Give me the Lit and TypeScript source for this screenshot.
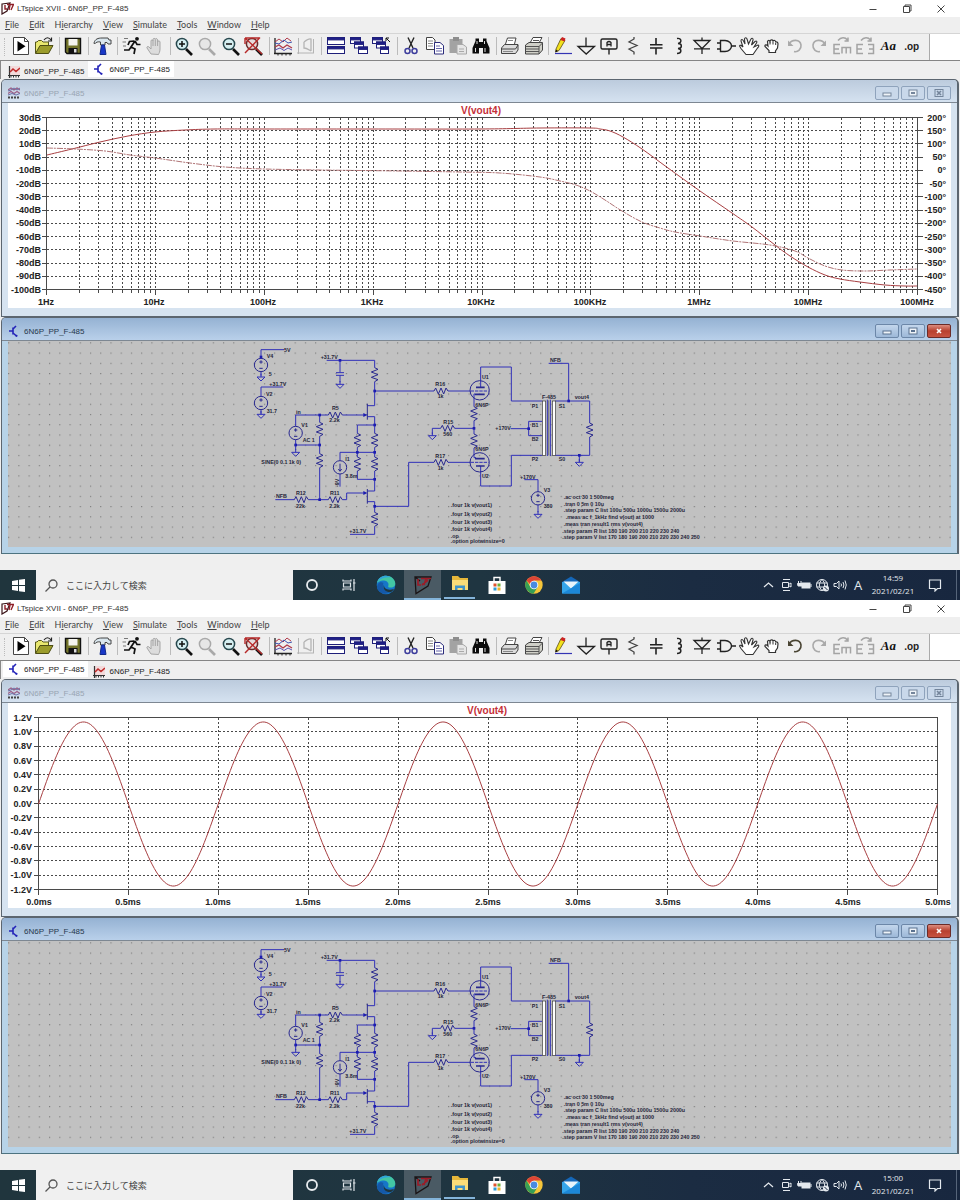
import { LitElement, html, svg, css, nothing } from "lit";
import { customElement, property } from "lit/decorators.js";
import { classMap } from "lit/directives/class-map.js";

type Pt = [number, number];

/* ---------- toolbar and window glyphs, each on a 24 x 20 canvas ---------- */

const lens = (stroke: string, handle: string, fill: string) => svg`
  <path d="M14 13 L20 19" stroke=${handle} stroke-width="2.6"/>
  <circle cx="10" cy="8" r="5.6" fill=${fill} stroke=${stroke} stroke-width="1.5"/>`;

const sheet = (x: number, y: number, w: number, h: number) => svg`
  <rect x=${x} y=${y} width=${w} height=${h} fill="#fff" stroke="#1f1f7a"/>
  <rect x=${x} y=${y} width=${w} height="2.4" fill="#1f1f8a" stroke="#1f1f7a"/>`;

const icons: Record<string, unknown> = {
  run: svg`<path d="M4.5 1.5 H15.5 L19.5 5.5 V18.5 H4.5 Z" fill="#fff" stroke="#444"/>
    <path d="M15.5 1.5 V5.5 H19.5" fill="none" stroke="#444"/><path d="M8.5 5 L16.5 10.2 L8.5 15.5 Z" fill="#000"/>`,
  open: svg`<path d="M3.5 17 V6 H5 L6.500 4.500 H9.500 L11 6 H16.500 V9" fill="#e9e870" stroke="#55561a"/>
    <path d="M3.500 17.500 L8 9.500 H21 L16.500 17.500 Z" fill="#9b9c2b" stroke="#4c4d14"/>
    <path d="M12 4 C14 1 17 1 19 4 M19.500 1.500 V5 H16" fill="none" stroke="#222" stroke-width="1.200"/>`,
  save: svg`<path d="M4.500 2.500 H19.500 V17.500 H6 L4.500 16 Z" fill="#73752a" stroke="#111" stroke-width="1.400"/>
    <rect x="7.500" y="3" width="9" height="6.500" fill="#f4f4ee"/><rect x="7.500" y="12" width="9" height="5.500" fill="#111"/>
    <rect x="13" y="13" width="2.500" height="3.500" fill="#ddd"/>`,
  hammer: svg`<path d="M4 7 C5 3 8 2 12 2 H18 L19 4 H21 V8 H18 L17 6.500 H15 V9 H10.500 V6 C8 5.500 6 6 4.500 8 Z" fill="#d9e6ee" stroke="#444"/>
    <path d="M11.500 9 H14.500 L16 18.500 H10 Z" fill="#1838c8" stroke="#122a8c"/>`,
  runner: svg`<circle cx="17" cy="2.800" r="1.900" fill="#111"/>
    <path d="M15 5 L11 11 L15 13 L14 18 M11 11 L9 14 H4 M15 5 L17 8.500 H20.500 M14.500 5 L9.500 5.500 L8 9" fill="none" stroke="#111" stroke-width="1.700"/>
    <path d="M4 2.500 H8 M2.500 6 H6 M3 10 H6" stroke="#777"/>`,
  hand: svg`<path d="M8 18 L4 12 C3.500 10.500 5 10 6 11 L8 13 V5 C8 3.500 10 3.500 10 5 V3.500 C10 2 12.300 2 12.300 3.500 V3.500 C12.300 2 14.600 2.300 14.600 4 V6 C14.600 4.500 17 4.500 17 6 V13 C17 16 16 17 15.500 18.500 Z" fill="#dcdcdc" stroke="#a6a6a6"/>
    <path d="M10 5 V10 M12.300 4 V10 M14.600 5 V10" stroke="#a6a6a6"/>`,
  zoomin: svg`${lens("#27484e", "#111", "#d6f0f2")}<path d="M7 8 H13 M10 5 V11" stroke="#111" stroke-width="1.500"/>`,
  zoomgray: lens("#a9a9a9", "#a9a9a9", "#e6e6e6"),
  zoomout: svg`${lens("#27484e", "#111", "#d6f0f2")}<path d="M7 8 H13" stroke="#111" stroke-width="1.500"/>`,
  zoomfit: svg`${lens("#6b2b2b", "#111", "#e6dcdc")}<path d="M3 2 L20 18 M18 1.500 L3 17 M3 2 V8 M3 2 H17" stroke="#b72a2a" stroke-width="1.400" fill="none"/>`,
  plots: svg`<path d="M4 2 V18 M3 17.500 H21" stroke="#222" stroke-width="1.300"/>
    <path d="M4 6 L8 3 L12 6 L16 2 L20 5" fill="none" stroke="#b03a4a"/><path d="M4 7 L8 8 L13 4 L17 7 L21 6" fill="none" stroke="#3a50b0"/>
    <path d="M4 11 L8 9 L12 12 L16 9 L21 12" fill="none" stroke="#b03a4a" stroke-width="1.300"/><path d="M4 14 L9 12 L13 14.500 L17 12 L21 14" fill="none" stroke="#5a50b0"/>
    <path d="M7 17 V19.500 M11 17 V19.500 M15 17 V19.500 M19 17 V19.500" stroke="#222"/>`,
  plotgray: svg`<path d="M4.500 2 V18 M3 17 H20 M19.500 3 V17" stroke="#b4b4b4" fill="none"/>
    <path d="M10 6 C15 2 17 3 17 3 V15 M10 6 V12 C13 12 15 14 17 15" fill="none" stroke="#b4b4b4" stroke-width="1.300"/>`,
  tile: svg`${sheet(3.5, 1.5, 17, 7)}${sheet(3.5, 10.5, 17, 7)}`,
  cascade: svg`${sheet(3.5, 1.5, 10, 6)}${sheet(7.5, 6, 9, 6)}${sheet(11.5, 11, 9, 6.5)}`,
  cascade2: svg`${sheet(2.5, 1.5, 10, 6)}${sheet(6.5, 6, 9, 6)}${sheet(10.5, 11, 8, 6.5)}
    <path d="M20 6 L16 2 M16 5 V2 H19" stroke="#111" fill="none"/>`,
  cut: svg`<path d="M9 1.500 L14 12 M15 1.500 L10 12" stroke="#222" stroke-width="1.400"/>
    <circle cx="8.500" cy="15" r="2.500" fill="none" stroke="#3c3c9c" stroke-width="1.500"/><circle cx="15.500" cy="15" r="2.500" fill="none" stroke="#3c3c9c" stroke-width="1.500"/>`,
  copy: svg`<path d="M3.500 1.500 H9.500 L12 4 V13.500 H3.500 Z" fill="#fff" stroke="#444"/><path d="M5 5 H10 M5 7.500 H10 M5 10 H10" stroke="#888"/>
    <path d="M11.500 6.500 H17 L20.500 9.500 V18 H11.500 Z" fill="#fff" stroke="#2c2c7c"/><path d="M13 10 H17 M13 12.500 H19 M13 15 H19" stroke="#66a"/>`,
  paste: svg`<rect x="3.500" y="3" width="13" height="14" fill="#a3a3a3"/><rect x="7" y="1" width="6" height="4" fill="#8e8e8e"/>
    <path d="M11 8.500 H17 L20.500 11 V18 H11 Z" fill="#e6e6e6" stroke="#a8a8a8"/><path d="M13 13 H18 M13 15.500 H18" stroke="#aaa"/>`,
  find: svg`<path d="M3.500 17.500 V12 L6.500 5 V2.500 H10 V6 H14 V2.500 H17.500 V5 L20.500 12 V17.500 H14 V12 H10 V17.500 Z" fill="#0c0c0c"/>
    <path d="M6.500 12 V16 M16 12 V16 M8 5 V8 M15.500 5 V8" stroke="#ddd"/>`,
  print: svg`<path d="M7.500 8 L9.500 2 H18 L16.500 8" fill="#fff" stroke="#444"/><path d="M3.500 12 L6.500 8.500 H20 V14 L17.500 17.500 H3.500 Z" fill="#dcdcdc" stroke="#444"/>
    <path d="M3.500 13 H17.500 L20 9" stroke="#444" fill="none"/><path d="M5 15.500 H15 M10 4.500 H15" stroke="#888"/>`,
  print2: svg`<path d="M8 7 L11 1.500 H20 L17 7" fill="#fff" stroke="#444"/><path d="M3.500 9 L7 6.500 H20.500 V14 L17 18 H3.500 Z" fill="#d0d0c8" stroke="#444"/>
    <path d="M3.500 10.500 H17 L20.500 7 M3.500 13 H17 M3.500 15.500 H17 M17 10 V18 M11 4.500 H17" stroke="#555" fill="none"/>`,
  pencil: svg`<path d="M5 13 L10 2.500 L14 4.500 L8 14.500 L4.500 16 Z" fill="#f2e11c" stroke="#5a4a10" stroke-width=".8"/><path d="M9.500 4 L11 1 L14.500 2.500 L13.500 5.500 Z" fill="#c22"/>
    <path d="M4.500 16.500 L5 13.500 L7 15 Z" fill="#111"/><path d="M4 17.500 H21" stroke="#3434b4" stroke-width="1.200"/>`,
  ground: svg`<path d="M12 1.500 V10 M4 10.500 H20.500 L12.200 18 Z" fill="none" stroke="#222" stroke-width="1.300"/>`,
  label: svg`<rect x="4" y="3" width="16" height="10" rx="1.500" fill="none" stroke="#222" stroke-width="1.400"/>
    <path d="M10 10.500 V6.500 Q12 4.500 14 6.500 V10.500 M10 8.500 H14" stroke="#222" fill="none" stroke-width="1.300"/><path d="M12 13 V18.500" stroke="#222" stroke-width="1.400"/>`,
  res: svg`<path d="M13 1 V3 L8 6 L16 9.500 L8 13 L13 16 V18.500" fill="none" stroke="#444" stroke-width="1.300"/>`,
  cap: svg`<path d="M12 2 V8.500 M12 12 V18.500 M6 8.700 H18.500 M6 12 H18.500" fill="none" stroke="#222" stroke-width="1.600"/>`,
  ind: svg`<path d="M10 2.500 C15 1.500 15 7 11 7.500 C15.500 7.500 15.500 12.500 11 12.500 C15 13 15 17.500 10 17.500" fill="none" stroke="#222" stroke-width="1.400"/>`,
  diode: svg`<path d="M12 1.500 V4.500 M4 4.500 H20 L12 12.500 Z M4 12.800 H20 M12 13 V18" fill="none" stroke="#222" stroke-width="1.300"/>`,
  gate: svg`<path d="M3 7 H6.500 M3 13 H6.500 M17 10 H22 M6.500 4.500 H11 C15 4.500 17.500 7.500 17.500 10 C17.500 12.500 15 15.500 11 15.500 H6.500 Z" fill="none" stroke="#222" stroke-width="1.400"/>`,
  move: svg`<path d="M9 18.500 L4 12.500 L2.500 10 C3 8.500 4.500 9.500 6 11 L4 5 C4 3 5.500 3 6.500 5 L8 8 L7.500 3 C8 1 9.500 1.500 10 3 L11.500 8 L14 3 C15 1.500 16.500 2.500 16 4 L14.500 9 L18 5.500 C19.500 4.500 20.500 5.500 19.500 7 L17 11 L21 9 C22.500 9.500 21.500 11 20.500 12 L16 18.500 Z" fill="#fff" stroke="#333" stroke-width="1.100"/>`,
  drag: svg`<path d="M9 16.500 V14.500 L5 10.500 C4.500 8.500 6.500 8.500 8 10 L7.500 5.500 C8 4 9.500 4 10 5.500 C10.500 3.500 12.500 3.500 13 5 C14 3.800 15.500 4.500 15.700 6 C17 5.500 18 6.500 18 8 L17.500 12 L15.500 15 V16.500 Z" fill="#fff" stroke="#333" stroke-width="1.200"/>
    <path d="M10 6 V8.500 M13 6 V8.500 M15.700 7 V9" stroke="#333"/>`,
  undo: svg`<path d="M6 8 C9 3 17 3 18 9 C18.500 13 15 16.500 11 15.500" fill="none" stroke="currentColor" stroke-width="1.600"/><path d="M5 4.500 V10 H10.500 Z" fill="currentColor"/>`,
  redo: svg`<path d="M18 8 C15 3 7 3 6 9 C5.500 13 9 16.500 13 15.500" fill="none" stroke="currentColor" stroke-width="1.600"/><path d="M19 4.500 V10 H13.500 Z" fill="currentColor"/>`,
  mirror: svg`<path d="M10 8.500 H4 V17.500 H10 M4 13 H9 M12 17.500 V11.500 H20.500 V17.500 M16.200 11.500 V17.500 M8 4.500 C11 1 15 1 17.500 4 M18 1.500 V5 H14.500" fill="none" stroke="#a4a4a4" stroke-width="1.500"/>`,
  flip: svg`<path d="M10 8.500 H4 V17.500 H10 M4 13 H9 M15 8.500 H20.500 V17.500 H15 M20 13 H16 M8 4.500 C11 1 15 1 17.500 4 M18 1.500 V5 H14.500" fill="none" stroke="#a4a4a4" stroke-width="1.500"/>`,
};

const icon = (name: string) => svg`<svg class="glyph" viewBox="0 0 24 20" aria-hidden="true">${icons[name]}</svg>`;

const toolbar: string[][] = [
  ["run", "open"], ["save"], ["hammer"], ["runner", "hand"],
  ["zoomin", "zoomgray", "zoomout", "zoomfit"], ["plots", "plotgray"],
  ["tile", "cascade", "cascade2"], ["cut", "copy", "paste", "find"], ["print", "print2"],
  ["pencil", "ground", "label", "res", "cap", "ind", "diode", "gate", "move", "drag", "undo", "redo", "mirror", "flip", "Aa", ".op"],
];

const menus: [string, string, string][] = [
  ["", "F", "ile"], ["", "E", "dit"], ["H", "i", "erarchy"], ["", "V", "iew"],
  ["", "S", "imulate"], ["", "T", "ools"], ["", "W", "indow"], ["", "H", "elp"],
];

const waveIcon = svg`<svg class="tabicon" viewBox="0 0 12 12" aria-hidden="true">
  <rect x="1" y="0" width="11" height="9" fill="#f3dada"/><path d="M1.500 0 V12 M0 9.500 H12" stroke="#333" stroke-width="1.200"/>
  <path d="M2 6 L5 3 L8 5.500 L12 2" fill="none" stroke="#c02a2a" stroke-width="1.600"/><path d="M3 9 V11.500 M5.500 9 V11.500 M8 9 V11.500 M10.500 9 V11.500" stroke="#333"/></svg>`;
const waveDim = svg`<svg class="tabicon" viewBox="0 0 12 12" aria-hidden="true">
  <path d="M0 3 L3 1 L6 3 L9 1 L12 3 M0 6.500 L3 4.500 L6 6.500 L9 4.500 L12 6.500" fill="none" stroke="#9a5f86" stroke-width="1.200"/>
  <path d="M0 4 L3 3 L6 1 L9 3 L12 1 M0 8 L4 6.500 L8 8 L12 6.500" fill="none" stroke="#6b70a8"/><path d="M0 10.500 H12" stroke="#444" stroke-width="2" stroke-dasharray="2 1"/></svg>`;
const jfetIcon = svg`<svg class="tabicon" viewBox="0 0 12 12" aria-hidden="true">
  <path d="M1 6 H5 M5 2.500 V9.500 M5 4 L8 1 M5 8 L8.500 11" fill="none" stroke="#2323b8" stroke-width="1.600"/><circle cx="8.500" cy="10.800" r="1.100" fill="#2323b8"/></svg>`;
const ltMark = svg`
  <path d="M1 2 L9 1 L6 9 L1 12 Z" fill="none" stroke="#3a1418" stroke-width="1.200"/>
  <path d="M4 3 V7 H6 M6 2.500 H12.500 L10 8 M9 3 L8 8" fill="none" stroke="#8e1f28" stroke-width="1.400"/>`;

/* ---------- curves ---------- */

const magnitude: Pt[] = [[47, 155], [72, 149], [100, 142], [128, 136], [155, 132], [185, 130], [215, 129], [264, 129], [372, 129], [480, 129], [540, 128], [590, 128], [600, 129], [610, 131], [623, 137], [642, 149], [668, 168], [700, 191], [732, 213], [752, 227], [775, 245], [790, 256], [808, 267], [825, 275], [840, 279], [860, 282], [885, 285], [905, 286], [917, 286]];
const phase: Pt[] = [[47, 148], [75, 149], [105, 151], [130, 155], [155, 158], [190, 163], [225, 167], [264, 169], [320, 170], [400, 171], [460, 172], [500, 173], [540, 177], [560, 181], [576, 185], [590, 191], [605, 200], [622, 211], [642, 222], [660, 228], [675, 232], [700, 236], [733, 241], [770, 245], [795, 251], [808, 258], [825, 266], [842, 270], [865, 271], [890, 270], [917, 269]];

function spline(p: Pt[]): string {
  let d = `M${p[0][0]} ${p[0][1]}`;
  for (let i = 0; i < p.length - 1; i++) {
    const a = p[Math.max(i - 1, 0)], b = p[i], c = p[i + 1], e = p[Math.min(i + 2, p.length - 1)];
    d += ` C${b[0] + (c[0] - a[0]) / 6} ${b[1] + (c[1] - a[1]) / 6} ${c[0] - (e[0] - b[0]) / 6} ${c[1] - (e[1] - b[1]) / 6} ${c[0]} ${c[1]}`;
  }
  return d;
}

function bodePlot() {
  const x0 = 46.5, x1 = 917.5, y0 = 117.5, y1 = 289.5;
  const dy = (y1 - y0) / 13, dec = (x1 - x0) / 8;
  const rows = Array.from({ length: 14 }, (_, i) => i);
  const hz = ["1Hz", "10Hz", "100Hz", "1KHz", "10KHz", "100KHz", "1MHz", "10MHz", "100MHz"];
  const vert: number[] = [];
  for (let d = 0; d < 8; d++) for (let k = 1; k < 10; k++) vert.push(x0 + dec * (d + Math.log10(k)));
  return svg`<svg class="pane" viewBox="8 103 943 205" role="img" aria-label="V(vout4) frequency response">
    <text class="trace" x="481" y="114">V(vout4)</text>
    <g class="grid">
      ${vert.slice(1).map((x) => svg`<line x1=${x} y1=${y0} x2=${x} y2=${y1}/>`)}
      ${rows.slice(1, 13).map((i) => svg`<line x1=${x0} y1=${y0 + dy * i} x2=${x1} y2=${y0 + dy * i}/>`)}
    </g>
    <g class="axis">
      <path d="M${x0 - 5} ${y0} H${x1 + 5} M${x0 - 5} ${y1} H${x1 + 5} M${x0} ${y0} V${y1 + 5} M${x1} ${y0} V${y1 + 5}"/>
      ${rows.map((i) => svg`<path d="M${x0 - 5} ${y0 + dy * i} H${x0} M${x1} ${y0 + dy * i} H${x1 + 5}"/>`)}
      ${vert.map((x) => svg`<path d="M${x} ${y1} v3"/>`)}
      ${hz.map((_, i) => svg`<path d="M${x0 + dec * i} ${y1} v5"/>`)}
    </g>
    ${rows.map((i) => svg`<text class="num end" x="41" y=${Math.round(y0 + dy * i) + 3}>${30 - 10 * i}dB</text>
      <text class="num end" x="946" y=${Math.round(y0 + dy * i) + 3}>${200 - 50 * i}°</text>`)}
    ${hz.map((t, i) => svg`<text class="num mid" x=${Math.round(x0 + dec * i - 1)} y="305">${t}</text>`)}
    <path class="curve" d=${spline(magnitude)}/>
    <path class="curve thin" d=${spline(phase)}/>
  </svg>`;
}

function transientPlot() {
  const x0 = 38.5, x1 = 937.5, y0 = 117.5, y1 = 289.5;
  const dy = (y1 - y0) / 12, dx = (x1 - x0) / 10, mid = (y0 + y1) / 2;
  const rows = Array.from({ length: 13 }, (_, i) => i);
  const cols = Array.from({ length: 11 }, (_, i) => i);
  const pts = Array.from({ length: 451 }, (_, i) => {
    const x = x0 + ((x1 - x0) * i) / 450;
    return `${x.toFixed(1)},${(mid + 0.5 - 82 * Math.sin((i / 90) * 2 * Math.PI)).toFixed(1)}`;
  }).join(" ");
  return svg`<svg class="pane" viewBox="8 103 943 205" role="img" aria-label="V(vout4) transient">
    <text class="trace" x="487" y="114">V(vout4)</text>
    <g class="grid">
      ${cols.slice(1, 10).map((i) => svg`<line x1=${x0 + dx * i} y1=${y0} x2=${x0 + dx * i} y2=${y1}/>`)}
      ${rows.slice(1, 12).map((i) => svg`<line x1=${x0} y1=${y0 + dy * i} x2=${x1} y2=${y0 + dy * i}/>`)}
    </g>
    <g class="axis">
      <path d="M${x0 - 5} ${y0} H${x1} V${y1} H${x0 - 5} M${x0} ${y0} V${y1}"/>
      ${rows.map((i) => svg`<path d="M${x0 - 5} ${y0 + dy * i} H${x0}"/>`)}
      ${cols.map((i) => svg`<path d="M${x0 + dx * i} ${y1} v5"/>`)}
    </g>
    ${rows.map((i) => svg`<text class="num end" x="32" y=${Math.round(y0 + dy * i) + 3}>${((6 - i) / 5).toFixed(1)}V</text>`)}
    ${cols.map((i) => svg`<text class="num mid" x=${Math.round(x0 + dx * i)} y="305">${(i / 2).toFixed(1)}ms</text>`)}
    <polyline class="curve" points=${pts}/>
  </svg>`;
}

/* ---------- schematic, three drawing units to one pixel ---------- */

const resV = (x: number, y: number) => svg`<path class="part" d="M${x} ${y} l10 5 l-20 8 l20 8 l-20 8 l20 7 l-10 6"/>`;
const resH = (x: number, y: number) => svg`<path class="part" d="M${x} ${y} l5 -9 l8 18 l8 -18 l8 18 l7 -18 l6 9"/>`;
const gnd = (x: number, y: number) => svg`<path class="wire" d="M${x} ${y - 10} V${y} M${x - 12} ${y} H${x + 12} L${x} ${y + 12} Z"/>`;
const node = (x: number, y: number) => svg`<rect x=${x - 4} y=${y - 4} width="8" height="8" fill="#1c1cb0"/>`;
const src = (x: number, y: number) => svg`<circle class="part" cx=${x} cy=${y} r="20"/><path class="part" d="M${x - 5} ${y - 9} h10 M${x} ${y - 14} v10 M${x - 5} ${y + 10} h10"/>`;
const tag = (x: number, y: number, t: string) => svg`<text x=${x} y=${y}>${t}</text>`;

function schematic() {
  return svg`<svg class="pane" viewBox="24 18 2829 618" role="img" aria-label="Schematic 6N6P_PP_F-485">
    <defs><pattern id="dots" x="41" y="8" width="30.700" height="30.700" patternUnits="userSpaceOnUse"><rect x="14" y="14" width="3.400" height="3.400" fill="#7a7a7a"/></pattern></defs>
    <rect x="24" y="18" width="2829" height="618" fill="#c1c1c1"/>
    <rect x="24" y="18" width="2829" height="618" fill="url(#dots)"/>
    <g transform="translate(720 0)">
      <path class="wire" d="M63 70 V44 H132 M63 110 V122 M63 184 V156 H130 M63 224 V236 M260 76 H404 V98 M300 76 V112 M288 113 H312 M288 121 H312 M300 121 V142 M404 140 V212 H382 M404 168 H582 M624 168 H692
        M376 240 H307 M265 240 H167 V274 M382 245 H404 V295 M404 270 H352 V295 M352 337 V366 M404 337 V366 M300 377 V352 H404 M300 417 V455 M352 408 V433 H404 M404 408 V468 H382 M376 474 H320 V494 H307 M265 494 H205 M163 494 H106
        M382 500 H404 V532 M404 514 H506 V382 H582 M624 382 H692 M404 574 V598 H330 M167 314 V345 M167 330 H239 M239 240 V262 M239 304 V356 M239 398 V494"/>
      <path class="part" d="M382 206 V254 M382 462 V506"/>
      <path d="M370 234 L382 240 L370 246 Z M370 468 L382 474 L370 480 Z" fill="#1c1cb0"/>
      ${src(63, 90)}${src(63, 204)}${src(167, 294)}
      <circle class="part" cx="300" cy="397" r="20"/><path class="part" d="M300 386 V408 M295 402 L300 409 L305 402"/>
      ${gnd(63, 126)}${gnd(63, 238)}${gnd(300, 148)}${gnd(167, 352)}
      ${resV(404, 98)}${resV(404, 295)}${resV(352, 295)}${resV(404, 366)}${resV(352, 366)}${resV(404, 532)}${resV(239, 262)}${resV(239, 356)}
      ${resH(582, 168)}${resH(582, 382)}${resH(265, 240)}${resH(265, 494)}${resH(163, 494)}
      ${[[63, 66], [300, 76], [404, 168], [404, 270], [404, 352], [352, 352], [404, 433], [404, 514], [239, 240], [239, 330], [167, 330], [239, 494]].map(([x, y]) => node(x, y))}
      ${tag(132, 50, "5V")}${tag(80, 70, "V4")}${tag(86, 122, "5")}${tag(88, 153, "+31.7V")}${tag(78, 184, "V2")}${tag(80, 235, "31.7")}
      ${tag(242, 72, "+31.7V")}${tag(586, 154, "R16")}${tag(593, 190, "1k")}${tag(276, 225, "R5")}${tag(268, 262, "2.2k")}${tag(168, 237, "in")}
      ${tag(184, 276, "V1")}${tag(188, 320, "AC 1")}${tag(64, 386, "SINE(0 0.1 1k 0)")}${tag(316, 378, "I1")}${tag(316, 428, "3.8m")}
      <text transform="translate(297 456) rotate(-90)">-9V</text>
      ${tag(108, 490, "NFB")}${tag(168, 481, "R12")}${tag(168, 519, "22k")}${tag(270, 481, "R11")}${tag(268, 519, "2.2k")}
      ${tag(328, 594, "+31.7V")}${tag(586, 368, "R17")}${tag(593, 406, "1k")}
    </g>
    <g transform="translate(1260 0)">
      <path class="wire" d="M182 156 V96 H274 V198 H367 M274 361 V453 H182 V393 M274 361 H367 M165 177 H162 V215 M162 257 V297 M162 339 V368 H168 M162 280 H104 M62 280 H37 V298
        M272 281 H326 M367 259 H326 V302 H367 M406 198 H509 V264 M509 306 V361 H406 M446 198 V85 H386 M478 361 V380 M313 434 H354 V471 M354 509 V532"/>
      <path class="wire gridline" d="M152 168 H206 M152 382 H206"/>
      <circle class="part" cx="179" cy="166" r="29"/><circle class="part" cx="179" cy="382" r="29"/>
      <path class="part heavy" d="M168 157 H194 M165 178 H194 M168 393 H194 M165 371 H194"/>
      ${resV(162, 215)}${resV(162, 297)}${resV(509, 264)}${resH(62, 280)}
      <rect x="367" y="198" width="10" height="163" fill="#fff" stroke="#333" stroke-width="2"/><rect x="397" y="198" width="10" height="163" fill="#fff" stroke="#333" stroke-width="2"/>
      <path class="wire" d="M382 194 V363 M391 194 V363"/><path d="M386 196 V361" stroke="#777" stroke-width="3"/>
      ${src(354, 490)}${gnd(37, 302)}${gnd(478, 382)}${gnd(354, 538)}
      ${[[162, 280], [326, 281], [446, 198], [478, 361]].map(([x, y]) => node(x, y))}
      ${tag(186, 132, "U1")}${tag(166, 216, "6N6P")}${tag(166, 348, "6N6P")}${tag(186, 429, "U2")}
      ${tag(70, 266, "R15")}${tag(70, 303, "560")}${tag(366, 193, "F-485")}${tag(335, 218, "P1")}${tag(335, 277, "B1")}${tag(335, 318, "B2")}${tag(335, 379, "P2")}
      ${tag(416, 218, "S1")}${tag(416, 379, "S0")}${tag(226, 286, "+170V")}${tag(390, 81, "NFB")}${tag(464, 193, "vout4")}${tag(300, 431, "+170V")}${tag(371, 470, "V3")}${tag(371, 520, "380")}
      ${tag(92, 516, ".four 1k v(vout1)")}${tag(92, 543, ".four 1k v(vout2)")}${tag(92, 567, ".four 1k v(vout3)")}${tag(92, 588, ".four 1k v(vout4)")}${tag(92, 609, ".op")}${tag(92, 625, ".option plotwinsize=0")}
      ${tag(431, 493, ".ac oct 30 1 500meg")}${tag(431, 512, ".tran 0 5m 0 10u")}${tag(431, 532, ".step param C list 100u 500u 1000u 1500u 2000u")}${tag(437, 553, ".meas ac f_1kHz find v(out) at 1000")}
      ${tag(431, 573, ".meas tran result1 rms v(vout4)")}${tag(427, 593, ".step param R list 180 190 200 210 220 230 240")}${tag(427, 613, ".step param V list 170 180 190 200 210 220 230 240 250")}
    </g>
  </svg>`;
}

/* ---------- one child window of the workspace ---------- */

@customElement("child-window")
export class ChildWindow extends LitElement {
  @property({ type: Boolean }) active = false;
  @property() kind = "bode";

  static styles = css`
    :host { display: block; }
    .win { border: 1px solid #5c6670; border-right-width: 2px; border-radius: 5px 5px 0 0; padding: 0 6px 8px; background: #d6e3f0; }
    .win.active { background: #b7d3e8; padding-bottom: 6px; border-bottom: 1px solid #4d7380; }
    .bar { display: flex; align-items: center; height: 23px; margin: 0 -6px; padding: 0 6px; box-sizing: border-box; border-radius: 4px 4px 0 0;
      background: linear-gradient(#bccbdd, #d5e2f0); border-bottom: 1px solid #7d8792; font: 8px "Liberation Sans", sans-serif; color: #99a5b3; gap: 4px; }
    .active .bar { background: linear-gradient(#95b2d3, #b9d0ea); color: #26384c; }
    .tabicon { width: 12px; height: 12px; flex: none; margin-top: 3px; }
    .name { flex: 1; padding-top: 4px; }
    .ctl { width: 24px; height: 14px; padding: 0; border: 1px solid #8fa3bc; border-radius: 2px; background: #c9d8ea; color: #74859b; margin-left: -2px; margin-top: 3px; }
    .ctl svg { display: block; margin: auto; width: 10px; height: 8px; }
    .active .ctl { background: linear-gradient(#c3d6ec, #9db8d8); border-color: #6c87a8; color: #5a7290; }
    .active .ctl.close { background: linear-gradient(#dc8d80, #b8402f 50%, #c65442); border-color: #6b2b28; color: #fff; }
    .pane { display: block; width: 100%; height: auto; background: #fff; }
    .pane text { font-family: "Liberation Sans", sans-serif; }
    .trace { font-size: 10px; font-weight: bold; fill: #c52f38; text-anchor: middle; }
    .num { font-size: 9px; font-weight: bold; fill: #222; }
    .end { text-anchor: end; }
    .mid { text-anchor: middle; }
    .grid line { stroke: #4a4a4a; stroke-width: 1; stroke-dasharray: 2 2; shape-rendering: crispEdges; }
    .axis path { fill: none; stroke: #4a4a4a; stroke-width: 1; shape-rendering: crispEdges; }
    .curve { fill: none; stroke: #a83f42; stroke-width: 1; }
    .curve.thin { stroke: #b07476; stroke-dasharray: 6 1 2 1; }
    .wire { fill: none; stroke: #3030b8; stroke-width: 3; }
    .gridline { stroke-dasharray: 10 3; }
    .part { fill: none; stroke: #28288f; stroke-width: 3; }
    .heavy { stroke-width: 5; }
    .pane text:not(.num):not(.trace) { font-size: 16px; font-weight: bold; fill: #26263a; }
  `;

  render() {
    const body = this.kind === "bode" ? bodePlot() : this.kind === "transient" ? transientPlot() : schematic();
    return html`<section class=${classMap({ win: true, active: this.active })}>
      <header class="bar">
        ${this.active ? jfetIcon : waveDim}<span class="name">6N6P_PP_F-485</span>
        <button class="ctl" aria-label="Minimize"><svg viewBox="0 0 10 8"><rect x="1" y="4" width="8" height="3" fill="#eef3f8" stroke="currentColor"/></svg></button>
        <button class="ctl" aria-label="Maximize"><svg viewBox="0 0 10 8"><rect x="1" y="1" width="8" height="6" fill="#eef3f8" stroke="currentColor"/><rect x="3.500" y="3.500" width="3" height="1" fill="none" stroke="currentColor"/></svg></button>
        <button class="ctl close" aria-label="Close"><svg viewBox="0 0 10 8">${this.active ? nothing : svg`<rect x="1" y=".5" width="8" height="7" fill="none" stroke="currentColor"/>`}<path d="M3 2 L7 6 M7 2 L3 6" stroke="currentColor" stroke-width="1.600"/></svg></button>
      </header>
      ${body}
    </section>`;
  }
}

/* ---------- a full desktop: application window and taskbar ---------- */

@customElement("desk-screen")
export class DeskScreen extends LitElement {
  @property() plot = "bode";
  @property() time = "";

  static styles = css`
    :host { display: block; background: #efefef; color: #333; font-family: "Open Sans", sans-serif; }
    button { border: 0; background: none; padding: 0; margin: 0; font: inherit; color: inherit; }
    .title { display: flex; align-items: center; height: 17px; background: #fff; padding: 0 2px 0 1px; font: 8px "Liberation Sans", sans-serif; }
    .title .mark { width: 13px; height: 13px; flex: none; margin-right: 3px; }
    .title .name { flex: 1; white-space: nowrap; }
    .title button { width: 34px; height: 17px; }
    .title button svg { display: block; margin: auto; width: 10px; height: 10px; }
    .title button path { fill: none; stroke: #444; stroke-width: 1; }
    .menu { display: flex; gap: 10px; height: 16px; padding: 0 5px; font: 9px/16px "Lato", sans-serif; color: #444; }
    .tools { display: flex; height: 26px; border-top: 1px solid #d5d5d5; border-bottom: 1px solid #858585; background: #fff; padding-right: 30px; }
    .strip { display: flex; flex: 1 1 0; min-width: 0; background: #efefef; padding: 0 6px 0 4px; border-right: 1px solid #aaa; }
    .grip { flex: none; width: 1px; height: 18px; margin: 4px 4px 0 0; border-left: 1px dotted #bbb; box-sizing: border-box; }
    .strip button { flex: 1 1 0; min-width: 0; height: 24px; display: flex; align-items: center; justify-content: center; color: #aaa; }
    .strip button.on { color: #4a4534; }
    .strip .sep { width: 1px; height: 18px; margin: 3px 2px 0 3px; background: #bbb; flex: none; }
    .glyph { width: 24px; height: 20px; flex: none; }
    .strip .word { color: #111; font: italic bold 13px "Liberation Serif", serif; }
    .strip .op { color: #222; font: bold 10px "Liberation Sans", sans-serif; }
    .tabs { display: flex; height: 18px; padding-left: 2px; border-left: 1px solid #888; font: 8px "Liberation Sans", sans-serif; color: #222; }
    .tab { display: flex; align-items: center; gap: 4px; padding: 3px 4px 0 5px; height: 18px; }
    .tab.active { background: #fff; padding-top: 0; height: 16px; }
    .tabicon { width: 12px; height: 12px; flex: none; }
    .work { padding: 0 1px 16px; }
    .task { display: flex; align-items: center; height: 30px; background: linear-gradient(90deg, #20353d, #1f3541 50%, #1b2c42 72%, #18273f); color: #e4e9ee; }
    .start { width: 36px; height: 30px; }
    .start svg { display: block; margin: auto; width: 13px; height: 13px; }
    .search { display: flex; align-items: center; gap: 8px; width: 257px; height: 30px; background: #f0f0f0; padding: 0 9px; box-sizing: border-box; }
    .search svg { width: 13px; height: 13px; flex: none; }
    .search input { flex: 1; min-width: 0; border: 0; background: none; outline: 0; padding: 0; height: 20px; font: 9px "Noto Sans CJK JP", sans-serif; }
    .search input::placeholder { color: #444; opacity: 1; }
    .app { width: 37px; height: 30px; box-sizing: border-box; border-bottom: 2px solid transparent; padding-top: 2px; }
    .app svg { display: block; margin: auto; width: 20px; height: 20px; }
    .app.current { background: #4a5a64; border-bottom-color: #84b4da; }
    .app.opened { border-bottom: 0; padding: 2px 3px 0; }
    .app.opened::after { content: ""; display: block; height: 2px; margin-top: 4px; background: #84b4da; }
    .space { flex: 1; }
    .tray { width: 18px; height: 30px; font-size: 13px; }
    .tray svg { display: block; margin: auto; width: 15px; height: 14px; }
    .clock { width: 52px; font-size: 8px; line-height: 13px; text-align: center; padding-bottom: 3px; }
    .bell { width: 32px; height: 30px; margin-right: 5px; }
    .bell svg { display: block; margin: auto; width: 14px; height: 14px; }
    .edge { width: 4px; height: 30px; border-left: 1px solid #56657a; box-sizing: border-box; }
  `;

  private tool(name: string) {
    if (name === "Aa") return html`<button class="word" aria-label="Text">Aa</button>`;
    if (name === ".op") return html`<button class="op" aria-label="SPICE directive">.op</button>`;
    return html`<button class=${classMap({ on: name === "undo" && this.plot === "transient" })} aria-label=${name}>${icon(name)}</button>`;
  }

  private tab(icn: unknown, active: boolean) {
    return html`<button class=${classMap({ tab: true, active })}>${icn}<span>6N6P_PP_F-485</span></button>`;
  }

  render() {
    const bode = this.plot === "bode";
    return html`
      <header class="title">
        <svg class="mark" viewBox="0 0 13 13" aria-hidden="true">${ltMark}</svg><span class="name">LTspice XVII - 6N6P_PP_F-485</span>
        <button aria-label="Minimize"><svg viewBox="0 0 10 10"><path d="M1.500 5.500 H8.500"/></svg></button>
        <button aria-label="Restore"><svg viewBox="0 0 10 10"><path d="M1.500 2.500 H7.500 V8.500 H1.500 Z M3 2 V1 H9 V7 H8"/></svg></button>
        <button aria-label="Close"><svg viewBox="0 0 10 10"><path d="M1.500 1.500 L8.500 8.500 M8.500 1.500 L1.500 8.500"/></svg></button>
      </header>
      <nav class="menu">${menus.map(([a, k, b]) => html`<button>${a}<u>${k}</u>${b}</button>`)}</nav>
      <div class="tools"><div class="strip"><span class="grip"></span>
        ${toolbar.map((g, i) => html`${i ? html`<span class="sep"></span>` : nothing}${g.map((n) => this.tool(n))}`)}
      </div></div>
      <div class="tabs">${bode ? html`${this.tab(waveIcon, false)}${this.tab(jfetIcon, true)}` : html`${this.tab(jfetIcon, true)}${this.tab(waveIcon, false)}`}</div>
      <main class="work">
        <child-window .kind=${this.plot}></child-window>
        <child-window kind="schematic" active></child-window>
      </main>
      <footer class="task">
        <button class="start" aria-label="Start"><svg viewBox="0 0 13 13"><path d="M0 2 L6 1 V6 H0 Z M7 .8 L13 0 V6 H7 Z M0 7 H6 V12 L0 11 Z M7 7 H13 V13 L7 12.200 Z" fill="#fff"/></svg></button>
        <label class="search"><svg viewBox="0 0 13 13" aria-hidden="true"><circle cx="8" cy="5" r="4" fill="none" stroke="#555" stroke-width="1.300"/><path d="M5 8 L.5 12.500" stroke="#555" stroke-width="1.300"/></svg>
          <input type="text" aria-label="検索" placeholder="ここに入力して検索"></label>
        <button class="app" aria-label="Cortana"><svg viewBox="0 0 20 20"><circle cx="10" cy="10" r="5" fill="none" stroke="#e8ecef" stroke-width="1.800"/></svg></button>
        <button class="app" aria-label="Task view"><svg viewBox="0 0 20 20"><path d="M4 4.500 V6 H12 V4.500 M4 15.500 V14 H12 V15.500 M4.500 8 H11.500 V12 H4.500 Z M15 4 V16 M14 8 H16.500" fill="none" stroke="#dfe5e9" stroke-width="1.200"/></svg></button>
        <button class="app" aria-label="Edge"><svg viewBox="0 0 20 20">
          <circle cx="10" cy="10" r="9.300" fill="#1676c8"/><path d="M1 8 C2 3 6 .7 10 .7 C16 .7 19.500 5 19.300 9 C19 12 16 13 13 12.500 C11.500 12 12.500 11 12.500 9.500 C12.500 7 10 5.500 7 5.500 C4 5.500 2 7 1 8 Z" fill="#43c6a4"/>
          <path d="M1 8 C2 3 6 .7 10 .7 C12 .7 14 1.500 15 2.200 C10 2 3 3 1 8 Z" fill="#30a5dc"/><path d="M7.500 8 C5.500 12 8.500 17 14 17.300 C10 20 3 19 1.200 13 C.5 9 4 6 7.500 8 Z" fill="#1559a8"/><path d="M8 9.500 C7.500 13.500 11.500 16 18 14 C17 16 15.500 17.200 14 17.300 C9 17 6.500 13.500 8 9.500 Z" fill="#20353d"/></svg></button>
        <button class="app current" aria-label="LTspice"><svg viewBox="0 0 20 20"><path d="M2 2 L18 2 L15 11 L3 18.500 Z M2 2 L7 6" fill="none" stroke="#1a1416" stroke-width="1.300"/><path d="M5 4 V10 H8 M8 3.500 H18 M13 4 L11 10 M9 10 L15 5" fill="none" stroke="#9c1c28" stroke-width="1.700"/></svg></button>
        <button class="app opened" aria-label="Explorer"><svg viewBox="0 0 20 20"><path d="M2 3 H8 L10 5 H18 V17 H2 Z" fill="#e6b73a"/><path d="M2 7 H18 V17 H2 Z" fill="#f9dc78"/><path d="M5 17 V12.500 H15 V17 H12.500 V15 H7.500 V17 Z" fill="#3f94c9"/></svg></button>
        <button class="app" aria-label="Store"><svg viewBox="0 0 20 20"><path d="M7 6 V2.500 H13 V6" fill="none" stroke="#fff" stroke-width="1.400"/><rect x="1.500" y="6" width="17" height="13" fill="#fff"/><rect x="6.500" y="8.500" width="3" height="3" fill="#e0532c"/><rect x="10.500" y="8.500" width="3" height="3" fill="#6fae34"/><rect x="6.500" y="12.500" width="3" height="3" fill="#2e9bd6"/><rect x="10.500" y="12.500" width="3" height="3" fill="#f0b429"/></svg></button>
        <button class="app" aria-label="Chrome"><svg viewBox="0 0 20 20"><circle cx="10" cy="10" r="8.700" fill="#f5c63a"/><path d="M2.500 5.600 A8.700 8.700 0 0 0 9.500 18.700 L13.700 12 L10 10 L6.500 12 Z" fill="#37a055"/><path d="M2.500 5.600 A8.700 8.700 0 0 1 17.500 5.600 H10 L6 9 Z" fill="#dd4536"/><circle cx="10" cy="10" r="4.300" fill="#fff"/><circle cx="10" cy="10" r="3.400" fill="#4a8be0"/></svg></button>
        <button class="app" aria-label="Mail"><svg viewBox="0 0 20 20"><path d="M1 7 L10 1.500 L19 7 V9 H1 Z" fill="#1567b8"/><path d="M1 7 H19 V18.500 H1 Z" fill="#35a5ea"/><path d="M2.500 6.500 H17.500 L10 13.500 Z" fill="#e9f4fb"/><path d="M1 18.500 L19 8 V18.500 Z" fill="#1c87d8"/></svg></button>
        <span class="space"></span>
        <button class="tray" aria-label="Show hidden icons"><svg viewBox="0 0 15 14"><path d="M3 9 L7.500 5 L12 9" fill="none" stroke="#e4e9ee" stroke-width="1.200"/></svg></button>
        <button class="tray" aria-label="Meet now"><svg viewBox="0 0 15 14"><path d="M4 1.500 H11 M4 12.500 H11 M3.500 4.500 H9.500 V9.500 H3.500 Z M9.500 6.500 L12 5 V9 L9.500 7.500" fill="none" stroke="#e4e9ee"/></svg></button>
        <button class="tray" aria-label="Battery"><svg viewBox="0 0 15 14"><path d="M1.500 3 V6 M4 3 V6 M.5 5.500 H5 V8 H1 Z" stroke="#e4e9ee" fill="#e4e9ee"/><rect x="5" y="5" width="8" height="5" fill="#e4e9ee" stroke="#e4e9ee"/><path d="M14 6 V9" stroke="#e4e9ee"/></svg></button>
        <button class="tray" aria-label="Network"><svg viewBox="0 0 15 14"><circle cx="7" cy="7" r="5.500" fill="none" stroke="#e4e9ee"/><path d="M1.500 5 H12.500 M1.500 9 H12.500 M7 1.500 C3.500 5 3.500 9 7 12.500 M7 1.500 C10.500 5 10.500 9 7 12.500" fill="none" stroke="#e4e9ee"/><circle cx="11" cy="10.500" r="3" fill="#e4e9ee"/><path d="M9.500 9 L12.500 12" stroke="#18273f"/></svg></button>
        <button class="tray" aria-label="Volume"><svg viewBox="0 0 15 14"><path d="M1 5.500 H3.500 L6 3 V11 L3.500 8.500 H1 Z M8 5.500 Q9 7 8 8.500 M10 4 Q11.800 7 10 10 M12 2.500 Q14.500 7 12 11.500" fill="none" stroke="#e4e9ee"/></svg></button>
        <button class="tray" aria-label="Input mode">A</button>
        <div class="clock">${this.time}<br>2021/02/21</div>
        <button class="bell" aria-label="Notifications"><svg viewBox="0 0 14 14"><path d="M1.500 2 H12.500 V10.500 H9.500 L7 13 V10.500 H1.500 Z" fill="none" stroke="#e4e9ee" stroke-width="1.200"/></svg></button>
        <span class="edge"></span>
      </footer>`;
  }
}

@customElement("app-root")
export class AppRoot extends LitElement {
  static styles = css`:host { display: block; }`;
  render() {
    return html`<desk-screen plot="bode" time="14:59"></desk-screen><desk-screen plot="transient" time="15:00"></desk-screen>`;
  }
}
